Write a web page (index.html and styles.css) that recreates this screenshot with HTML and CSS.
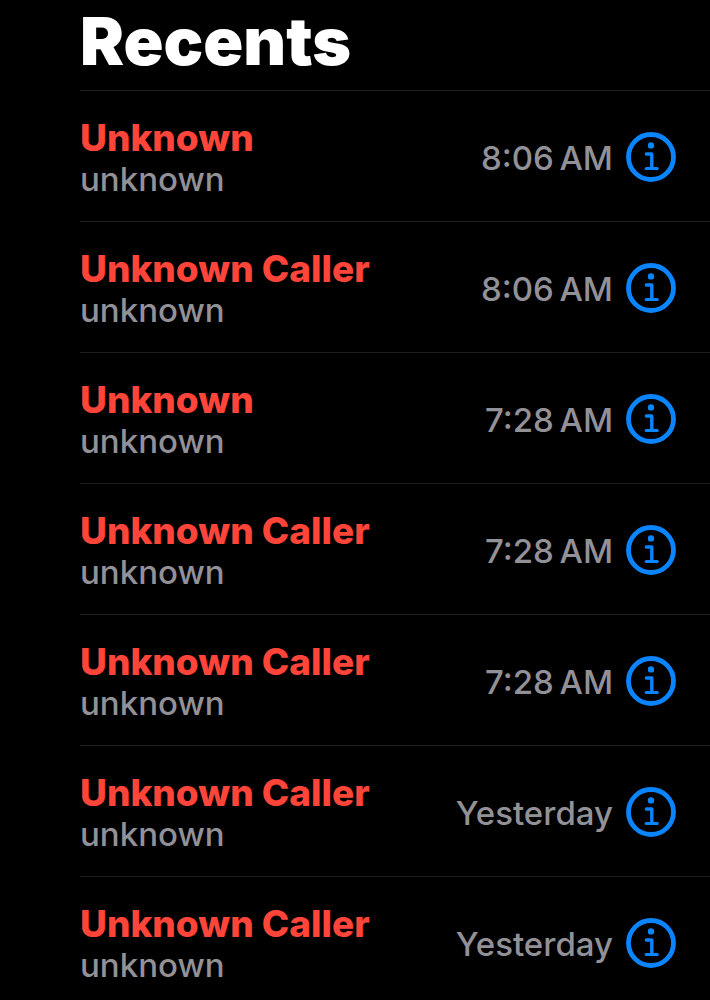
FILE: index.html
```html
<!DOCTYPE html>
<html lang="en">
<head>
  <meta charset="UTF-8">
  <meta name="viewport" content="width=device-width, initial-scale=1.0">
  <title>Recents</title>
  <link rel="stylesheet" href="styles.css">
</head>
<body>

  <svg class="sprite" aria-hidden="true">
    <symbol id="info" viewBox="0 0 50 50">
      <circle cx="25" cy="25" r="22.5" fill="none" stroke="currentColor" stroke-width="4.8"/>
      <circle cx="25" cy="13.4" r="3.2" fill="currentColor"/>
      <path d="M20.4 22h5.4v14.2" fill="none" stroke="currentColor" stroke-width="3.4" stroke-linecap="round" stroke-linejoin="round"/>
      <path d="M20.2 36.5h11" fill="none" stroke="currentColor" stroke-width="3.2" stroke-linecap="round"/>
    </symbol>
  </svg>

  <main class="recents">
    <h1>Recents</h1>

    <ul class="calls">
      <li class="call">
        <div class="caller">
          <span class="name">Unknown</span>
          <span class="label">unknown</span>
        </div>
        <time class="time">8:06&thinsp;AM</time>
        <button class="info" type="button" aria-label="Call info"><svg><use href="#info"/></svg></button>
      </li>
      <li class="call">
        <div class="caller">
          <span class="name">Unknown Caller</span>
          <span class="label">unknown</span>
        </div>
        <time class="time">8:06&thinsp;AM</time>
        <button class="info" type="button" aria-label="Call info"><svg><use href="#info"/></svg></button>
      </li>
      <li class="call">
        <div class="caller">
          <span class="name">Unknown</span>
          <span class="label">unknown</span>
        </div>
        <time class="time">7:28&thinsp;AM</time>
        <button class="info" type="button" aria-label="Call info"><svg><use href="#info"/></svg></button>
      </li>
      <li class="call">
        <div class="caller">
          <span class="name">Unknown Caller</span>
          <span class="label">unknown</span>
        </div>
        <time class="time">7:28&thinsp;AM</time>
        <button class="info" type="button" aria-label="Call info"><svg><use href="#info"/></svg></button>
      </li>
      <li class="call">
        <div class="caller">
          <span class="name">Unknown Caller</span>
          <span class="label">unknown</span>
        </div>
        <time class="time">7:28&thinsp;AM</time>
        <button class="info" type="button" aria-label="Call info"><svg><use href="#info"/></svg></button>
      </li>
      <li class="call">
        <div class="caller">
          <span class="name">Unknown Caller</span>
          <span class="label">unknown</span>
        </div>
        <time class="time">Yesterday</time>
        <button class="info" type="button" aria-label="Call info"><svg><use href="#info"/></svg></button>
      </li>
      <li class="call">
        <div class="caller">
          <span class="name">Unknown Caller</span>
          <span class="label">unknown</span>
        </div>
        <time class="time">Yesterday</time>
        <button class="info" type="button" aria-label="Call info"><svg><use href="#info"/></svg></button>
      </li>
    </ul>
  </main>

</body>
</html>
```
FILE: styles.css
```css
* {
  box-sizing: border-box;
}

body {
  margin: 0;
  background-color: #000;
  font-family: Inter, sans-serif;
}

.sprite {
  display: none;
}

.recents {
  padding-left: 80px;
}

h1 {
  margin: 0;
  padding: 7px 0 15px;
  color: #fff;
  font-size: 66px;
  font-weight: 900;
  line-height: 68px;
}

.calls {
  margin: 0;
  padding: 0;
  list-style: none;
}

.call {
  display: flex;
  align-items: center;
  padding: 26px 34px 22px 0;
  border-top: 1px solid #1e1e20;
}

.caller {
  flex: 1;
}

.name,
.label {
  display: block;
}

.name {
  color: #ff453a;
  font-size: 37px;
  font-weight: 800;
  line-height: 42px;
}

.label,
.time {
  color: #929197;
  font-size: 33px;
  font-weight: 500;
  line-height: 40px;
}

.time {
  margin-right: 13px;
}

.info {
  width: 50px;
  height: 50px;
  margin-bottom: 2px;
  padding: 0;
  border: 0;
  background: none;
  color: #0a84ff;
  cursor: pointer;
}

.info svg {
  display: block;
  width: 50px;
  height: 50px;
}
```
